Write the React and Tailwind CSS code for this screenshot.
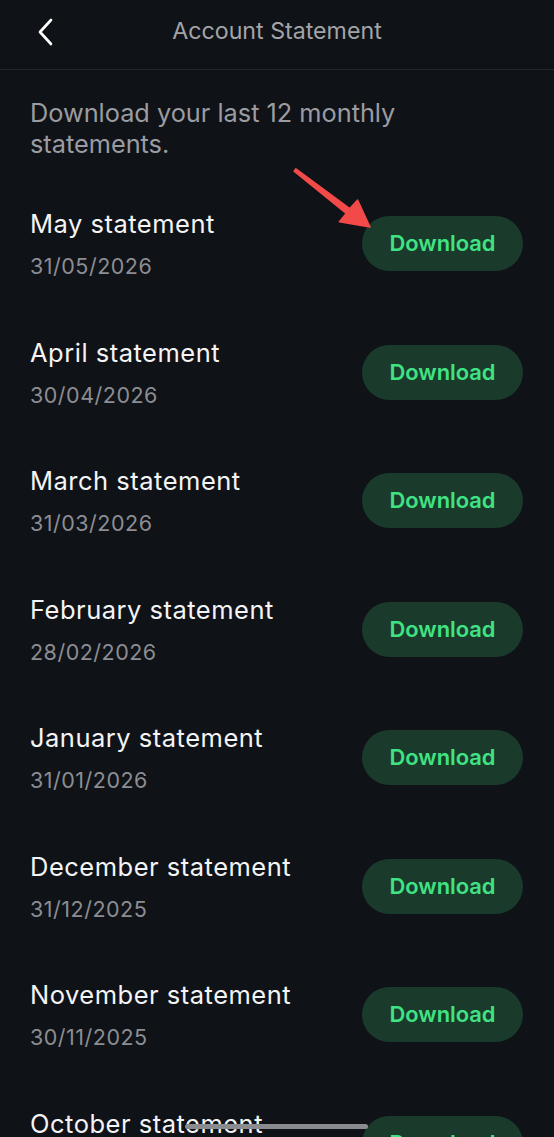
import React from "react";

const rows = [
  ["May statement", "31/05/2026"],
  ["April statement", "30/04/2026"],
  ["March statement", "31/03/2026"],
  ["February statement", "28/02/2026"],
  ["January statement", "31/01/2026"],
  ["December statement", "31/12/2025"],
  ["November statement", "30/11/2025"],
  ["October statement", "31/10/2025"],
];

export default function App() {
  return (
    <div
      className="relative w-[554px] h-[1137px] overflow-hidden bg-[#0f1217]"
      style={{ fontFamily: "Inter, 'Noto Sans', sans-serif" }}
    >
      <header className="relative flex h-[70px] items-center justify-center border-b border-[#23262c]">
        <button className="absolute left-[34px] top-[16px] flex h-[32px] w-[24px] items-center justify-center">
          <svg width="20" height="30" viewBox="0 0 20 30" fill="none">
            <path d="M15 3 L4 15 L15 27" stroke="#ffffff" strokeWidth="2.6" strokeLinecap="round" strokeLinejoin="round" />
          </svg>
        </button>
        <h1 className="-mt-[6px] text-[23.2px] font-normal text-[#a3a4a8]">Account Statement</h1>
      </header>

      <p className="mt-[27px] px-[30px] text-[25.3px] leading-[31px] text-[#9b9ca1]">
        Download your last 12 monthly
        <br />
        statements.
      </p>

      <div className="mt-[22px] flex flex-col">
        {rows.map(([title, date]) => (
          <div key={title} className="flex h-[128.5px] shrink-0 items-center justify-between pl-[30px] pr-[31px]">
            <div className="flex flex-col">
              <span className="-mt-[2px] text-[25.5px] leading-[36px] tracking-[0.5px] text-[#f4f4f5]">{title}</span>
              <span className="mt-[8px] text-[21.5px] leading-[32px] tracking-[0.5px] text-[#8c8d92]">{date}</span>
            </div>
            <button className="-mt-[3px] flex h-[55px] w-[161px] items-center justify-center rounded-full bg-[#1a3b2b] text-[21.9px] font-semibold text-[#40e383]">
              Download
            </button>
          </div>
        ))}
      </div>

      <svg
        className="pointer-events-none absolute left-0 top-0"
        width="554"
        height="300"
        viewBox="0 0 554 300"
      >
        <polygon
          points="294.1,171.2 346.2,213.4 339.4,221.8 370,227 357.6,200 349.8,208.6 295.9,168.8"
          fill="#f24a48"
          stroke="#f24a48"
          strokeWidth="1.5"
          strokeLinejoin="round"
        />
      </svg>

      <div className="absolute bottom-[8px] left-[185px] h-[5px] w-[183px] rounded-full bg-[#8a8b8f]" />
    </div>
  );
}
